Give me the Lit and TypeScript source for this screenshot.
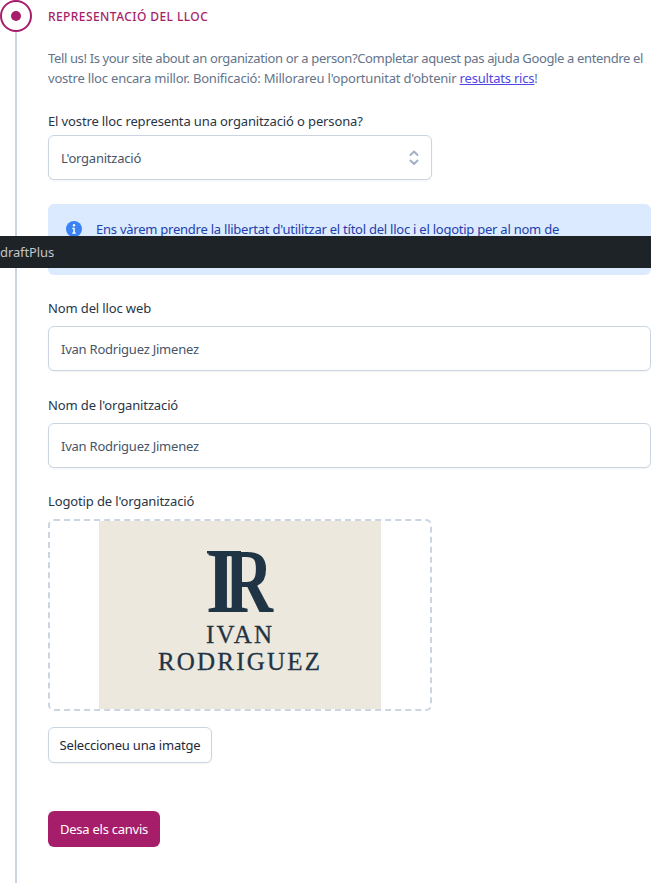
import { LitElement, html, css, svg } from "lit";
import { customElement } from "lit/decorators.js";

@customElement("app-root")
export class AppRoot extends LitElement {
  static styles = css`
    :host { display: block; width: 651px; height: 883px; overflow: hidden; position: relative; background: #fff;
      font-family: "Noto Sans", sans-serif; font-size: 13px; line-height: 20px; color: #334155; }
    .page { display: flex; height: 883px; }
    .rail { width: 48px; flex: none; display: flex; flex-direction: column; }
    .rail svg { display: block; flex: none; }
    .line { width: 2px; margin-left: 15px; flex: 1; background: #cbd5e1; }
    .main { width: 603px; flex: none; display: flex; flex-direction: column; }
    .title { height: 34px; display: flex; align-items: center; font-size: 12px; font-weight: 500; color: #a61e69; text-transform: uppercase; letter-spacing: 0.42px; }
    .intro { margin: 14px 0 0; color: #64748b; letter-spacing: -0.2px; white-space: nowrap; }
    .intro .long { letter-spacing: -0.36px; }
    .intro a { color: #4f46e5; text-decoration: underline; }
    .label { display: block; font-weight: 400; color: #283548; letter-spacing: -0.13px; }
    .first { margin-top: 23px; margin-bottom: 4px; }
    .next { margin-top: 24px; margin-bottom: 8px; }
    .after-notice { margin-top: 23px; }
    .tight { margin-top: 23px; }
    .select, .input { box-sizing: border-box; height: 45px; border: 1px solid #cbd5e1; border-radius: 6px; display: flex; align-items: center; padding: 0 12px; background: #fff; color: #475569; letter-spacing: -0.23px; box-shadow: 0 1px 2px rgba(0,0,0,.05); }
    .select { width: 384px; justify-content: space-between; padding-right: 8px; }
    .select svg { flex: none; }
    .notice { box-sizing: border-box; height: 71px; margin-top: 24px; padding: 15px 16px; border-radius: 6px; background: #dbeafe; color: #1e40af; display: flex; gap: 12px; white-space: nowrap; letter-spacing: -0.24px; }
    .notice svg { flex: none; }
    .drop { box-sizing: border-box; width: 384px; height: 192px; border: 2px dashed #cbd5e1; border-radius: 6px; display: flex; justify-content: center; align-items: flex-end; }
    .logo { display: block; }
    .pick { box-sizing: border-box; width: 164px; height: 36px; margin-top: 16px; border: 1px solid #cbd5e1; border-radius: 6px; background: #fff; color: #1e293b; font: 400 13px/20px "Noto Sans", sans-serif; letter-spacing: -0.2px; padding: 0; box-shadow: 0 1px 2px rgba(0,0,0,.05); }
    .save { box-sizing: border-box; width: 112px; height: 36px; margin-top: 48px; border: 0; border-radius: 6px; background: #a61e69; color: #fff; font: 400 13px/20px "Noto Sans", sans-serif; letter-spacing: -0.25px; padding: 0; }
    .bar { position: absolute; left: 0; top: 236px; width: 651px; height: 32px; background: #1d2327; color: #c3c4c7; line-height: 32px; font-size: 13px; letter-spacing: -0.1px; }
    .serif { font-family: "Liberation Serif", serif; fill: #1f3444; }
    .name { stroke: #1f3444; stroke-width: 0.3px; }
  `;

  render() {
    return html`
      <div class="page">
        <div class="rail">
          <svg width="32" height="32" viewBox="0 0 32 32">
            <circle cx="16" cy="16" r="15" fill="#fff" stroke="#a61e69" stroke-width="2"></circle>
            <circle cx="16" cy="16" r="5" fill="#a61e69"></circle>
          </svg>
          <div class="line"></div>
        </div>
        <div class="main">
          <div class="title">Representació del lloc</div>
          <p class="intro"><span class="long">Tell us! Is your site about an organization or a person?Completar aquest pas ajuda Google a entendre el</span><br>vostre lloc encara millor. Bonificació: Millorareu l'oportunitat d'obtenir <a href="#">resultats rics</a>!</p>
          <label class="label first">El vostre lloc representa una organització o persona?</label>
          <div class="select">
            <span>L'organització</span>
            <svg width="20" height="20" viewBox="0 0 20 20" fill="none" stroke="#a3b1c6" stroke-width="2" stroke-linecap="round" stroke-linejoin="round"><path d="M7.500 7 11 3.500 14.500 7M7.500 12.500 11 16 14.500 12.500"></path></svg>
          </div>
          <div class="notice">
            <svg width="20" height="20" viewBox="0 0 20 20"><circle cx="10" cy="10" r="8" fill="#3b82f6"></circle><circle cx="10" cy="6.300" r="1.200" fill="#fff"></circle><path d="M8.300 8.800h2.500v4.700h1v1.200H8.300v-1.200h1v-3.500h-1z" fill="#fff"></path></svg>
            <span>Ens vàrem prendre la llibertat d'utilitzar el títol del lloc i el logotip per al nom de</span>
          </div>
          <label class="label next after-notice">Nom del lloc web</label>
          <div class="input">Ivan Rodriguez Jimenez</div>
          <label class="label next">Nom de l'organització</label>
          <div class="input">Ivan Rodriguez Jimenez</div>
          <label class="label next tight">Logotip de l'organització</label>
          <div class="drop">
            <svg class="logo" width="282" height="188" viewBox="0 0 282 188">
              <rect width="282" height="188" fill="#ece8de"></rect>
              ${svg`
                <text class="serif" x="107" y="91" font-size="92" font-weight="700" textLength="30" lengthAdjust="spacingAndGlyphs">I</text>
                <text class="serif" x="126" y="91" font-size="92" font-weight="700" textLength="48" lengthAdjust="spacingAndGlyphs">R</text>
                <rect x="108" y="30" width="34" height="2.500" fill="#1f3444"></rect>
                <text class="serif name" x="140" y="122" font-size="25" text-anchor="middle" textLength="66" lengthAdjust="spacing">IVAN</text>
                <text class="serif name" x="140" y="149" font-size="25" text-anchor="middle" textLength="162" lengthAdjust="spacing">RODRIGUEZ</text>
              `}
            </svg>
          </div>
          <div><button class="pick">Seleccioneu una imatge</button></div>
          <div><button class="save">Desa els canvis</button></div>
        </div>
      </div>
      <div class="bar">draftPlus</div>
    `;
  }
}
